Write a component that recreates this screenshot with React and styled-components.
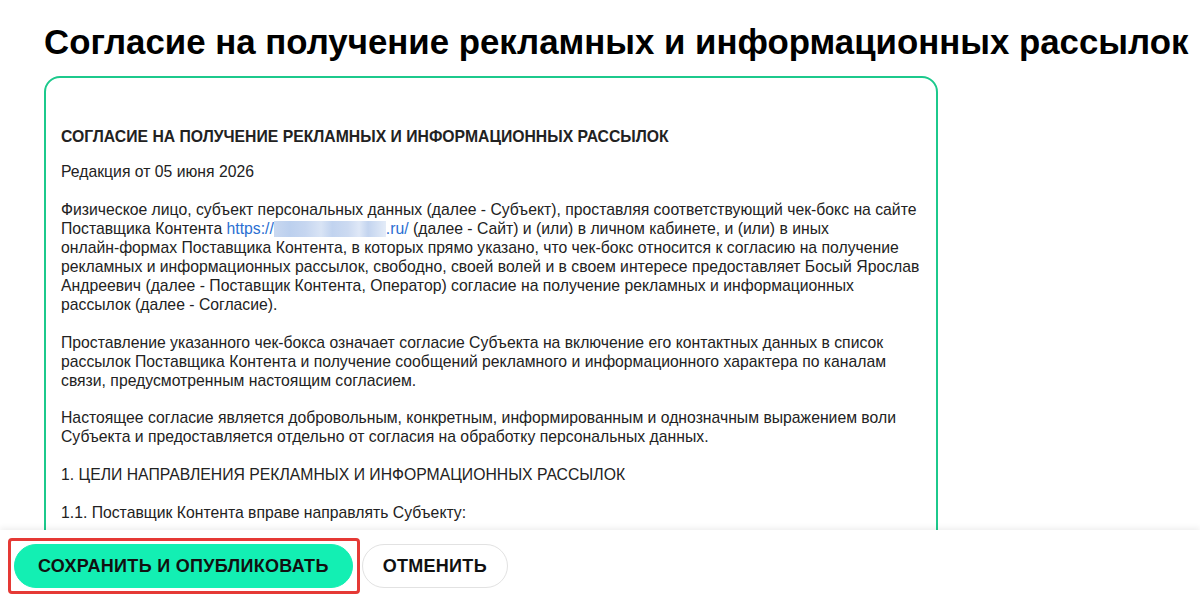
import React from "react";
import styled, { createGlobalStyle } from "styled-components";

const GlobalStyle = createGlobalStyle`
	html, body {
		margin: 0;
		padding: 0;
		background: #fff;
		font-family: "Liberation Sans", Arial, sans-serif;
		color: #222;
	}
`;

const Page = styled.div`
	height: 598px;
	display: flex;
	flex-direction: column;
	overflow: hidden;
`;

const Main = styled.main`
	flex: 1;
	min-height: 0;
	overflow: hidden;
	padding: 21px 0 0 44px;
`;

const Title = styled.h1`
	margin: 0 0 14px;
	font-size: 34.8px;
	line-height: 41px;
	font-weight: 700;
	color: #000;
	white-space: nowrap;
`;

const Card = styled.section`
	box-sizing: border-box;
	width: 894px;
	border: 2px solid #1cc98c;
	border-radius: 16px;
	padding: 49px 15px 0;
	font-size: 15.75px;
	line-height: 19px;
	color: #222;
`;

const Paragraph = styled.p`
	margin: 0 0 ${(p) => (p.$bold ? "16px" : "18.75px")};
	font-weight: ${(p) => (p.$bold ? 700 : 400)};
`;

const NoWrap = styled.span`
	white-space: nowrap;
`;

const Link = styled.a`
	color: #2b6fd2;
	text-decoration: none;
`;

const Blurred = styled.span`
	display: inline-block;
	width: 112px;
	height: 16px;
	vertical-align: -3px;
	background: linear-gradient(
		90deg,
		#c9d8f0 0%,
		#bcd0ee 14%,
		#c6d6f0 28%,
		#d9e4f5 42%,
		#c1d3ef 52%,
		#ccdaf1 66%,
		#dfe8f7 76%,
		#c3d4ef 84%,
		#e4ecf8 100%
	);
`;

const Bar = styled.footer`
	position: relative;
	z-index: 1;
	height: 68px;
	flex-shrink: 0;
	background: #fff;
	box-shadow: 0 -2px 6px rgba(0, 0, 0, 0.07);
	display: flex;
	align-items: center;
	gap: 2px;
	padding: 0 0 0 8px;
	box-sizing: border-box;
`;

const Highlight = styled.span`
	display: inline-flex;
	border: 3px solid #e53935;
	border-radius: 4px;
	padding: 3px 4px 3px 3px;
	margin-top: 4px;
`;

const Button = styled.button`
	height: 44px;
	border-radius: 22px;
	padding: 0 ${(p) => (p.$primary ? "23px" : "20px")};
	border: 1px solid ${(p) => (p.$primary ? "#13efb3" : "#e2e2e2")};
	background: ${(p) => (p.$primary ? "#13efb3" : "#fff")};
	color: #111;
	font-family: "Liberation Sans", Arial, sans-serif;
	font-size: 18px;
	font-weight: 700;
	letter-spacing: 0.3px;
	text-transform: uppercase;
	cursor: pointer;
	margin-top: ${(p) => (p.$primary ? "0" : "4px")};
`;

export default function App() {
	return (
		<>
			<GlobalStyle />
			<Page>
				<Main>
					<Title>Согласие на получение рекламных и информационных рассылок</Title>
					<Card>
						<Paragraph $bold>
							СОГЛАСИЕ НА ПОЛУЧЕНИЕ РЕКЛАМНЫХ И ИНФОРМАЦИОННЫХ РАССЫЛОК
						</Paragraph>
						<Paragraph>Редакция от 05 июня 2026</Paragraph>
						<Paragraph>
							Физическое лицо, субъект персональных данных (далее - Субъект),
							проставляя соответствующий чек-бокс на сайте Поставщика Контента{" "}
							<Link href="#">
								https://
								<Blurred />
								.ru/
							</Link>{" "}
							(далее - Сайт) и (или) в личном кабинете, и (или) в иных{" "}
							<NoWrap>онлайн-формах</NoWrap> Поставщика Контента, в которых
							прямо указано, что <NoWrap>чек-бокс</NoWrap> относится к согласию
							на получение рекламных и информационных рассылок, свободно, своей
							волей и в своем интересе предоставляет Босый Ярослав Андреевич
							(далее - Поставщик Контента, Оператор) согласие на получение
							рекламных и информационных рассылок (далее - Согласие).
						</Paragraph>
						<Paragraph>
							Проставление указанного <NoWrap>чек-бокса</NoWrap> означает
							согласие Субъекта на включение его контактных данных в список
							рассылок Поставщика Контента и получение сообщений рекламного и
							информационного характера по каналам связи, предусмотренным
							настоящим согласием.
						</Paragraph>
						<Paragraph>
							Настоящее согласие является добровольным, конкретным,
							информированным и однозначным выражением воли Субъекта и
							предоставляется отдельно от согласия на обработку персональных
							данных.
						</Paragraph>
						<Paragraph>1. ЦЕЛИ НАПРАВЛЕНИЯ РЕКЛАМНЫХ И ИНФОРМАЦИОННЫХ РАССЫЛОК</Paragraph>
						<Paragraph>1.1. Поставщик Контента вправе направлять Субъекту:</Paragraph>
						<Paragraph>
							1.1.1. информацию о новых продуктах, услугах, акциях и специальных
							предложениях Поставщика Контента;
						</Paragraph>
					</Card>
				</Main>
				<Bar>
					<Highlight>
						<Button $primary>Сохранить и опубликовать</Button>
					</Highlight>
					<Button>Отменить</Button>
				</Bar>
			</Page>
		</>
	);
}
